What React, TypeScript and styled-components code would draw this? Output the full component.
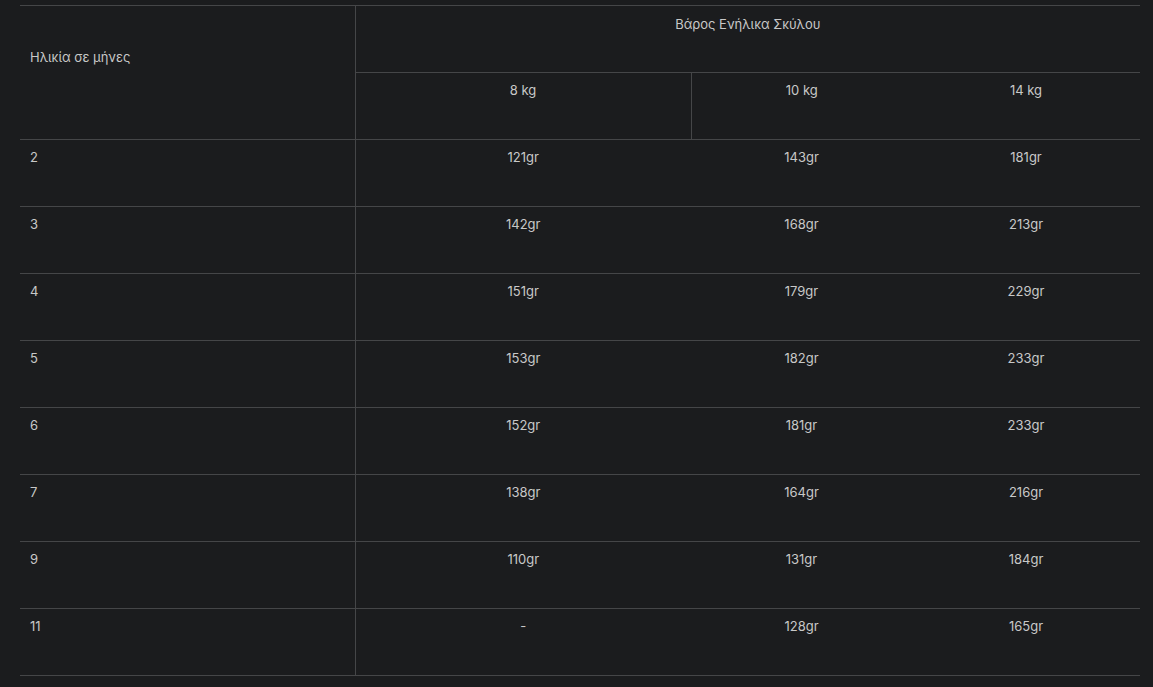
import React from "react";
import styled, { createGlobalStyle } from "styled-components";

const Global = createGlobalStyle`
  html, body { margin: 0; padding: 0; background: #1b1c1e; }
  body { font-family: Inter, "Noto Sans", sans-serif; color: #c8c8c8; }
`;

const Page = styled.div`
  padding: 5px 0 0 20px;
  background: #1b1c1e;
  min-height: 687px;
  box-sizing: border-box;
`;

const Table = styled.table`
  width: 1120px;
  border-collapse: collapse;
  table-layout: fixed;
  font-size: 13px;
  line-height: 16px;
  color: #c8c8c8;
`;

const HeadCell = styled.th<{ $left?: boolean; $divider?: boolean; $padTop?: number }>`
  height: 67px;
  box-sizing: border-box;
  padding: ${(p) => p.$padTop ?? 9}px 10px 0;
  vertical-align: top;
  font-weight: 400;
  text-align: ${(p) => (p.$left ? "left" : "center")};
  border-top: 1px solid #454648;
  border-bottom: 1px solid #454648;
  border-right: ${(p) => (p.$divider ? "1px solid #454648" : "none")};
`;

const Row = styled.tr`
  border-bottom: 1px solid #454648;
`;

const Cell = styled.td<{ $left?: boolean; $divider?: boolean }>`
  height: 67px;
  box-sizing: border-box;
  padding: 9px 10px 0;
  vertical-align: top;
  text-align: ${(p) => (p.$left ? "left" : "center")};
  border-right: ${(p) => (p.$divider ? "1px solid #454648" : "none")};
`;

const rows: [string, string, string, string][] = [
  ["2", "121gr", "143gr", "181gr"],
  ["3", "142gr", "168gr", "213gr"],
  ["4", "151gr", "179gr", "229gr"],
  ["5", "153gr", "182gr", "233gr"],
  ["6", "152gr", "181gr", "233gr"],
  ["7", "138gr", "164gr", "216gr"],
  ["9", "110gr", "131gr", "184gr"],
  ["11", "-", "128gr", "165gr"],
];

export default function App() {
  return (
    <>
      <Global />
      <Page>
        <Table>
          <colgroup>
            <col style={{ width: 335 }} />
            <col style={{ width: 336 }} />
            <col style={{ width: 221 }} />
            <col style={{ width: 228 }} />
          </colgroup>
          <thead>
            <tr>
              <HeadCell rowSpan={2} $left $divider $padTop={43}>
                Ηλικία σε μήνες
              </HeadCell>
              <HeadCell colSpan={3} $padTop={10}>
                Βάρος Ενήλικα Σκύλου
              </HeadCell>
            </tr>
            <tr>
              <HeadCell $divider>8 kg</HeadCell>
              <HeadCell>10 kg</HeadCell>
              <HeadCell>14 kg</HeadCell>
            </tr>
          </thead>
          <tbody>
            {rows.map((r) => (
              <Row key={r[0]}>
                <Cell $left $divider>
                  {r[0]}
                </Cell>
                <Cell>{r[1]}</Cell>
                <Cell>{r[2]}</Cell>
                <Cell>{r[3]}</Cell>
              </Row>
            ))}
          </tbody>
        </Table>
      </Page>
    </>
  );
}
